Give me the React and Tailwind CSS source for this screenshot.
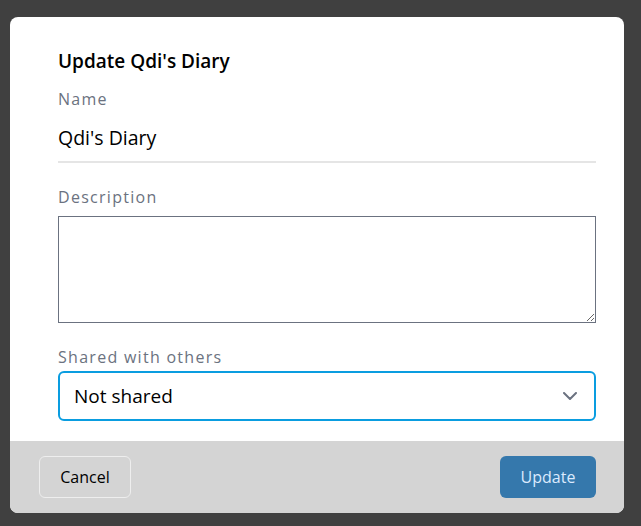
export default function App() {
  return (
    <div className="h-screen bg-[#404040] pl-[10px] pt-[17px]" style={{ fontFamily: '"Open Sans", sans-serif' }}>
      <div className="w-[614px] h-[496px] bg-white rounded-lg overflow-hidden flex flex-col">
        <div className="flex-1 pl-12 pr-7 pt-[32px]">
          <h2 className="text-[19px] font-semibold leading-[24px] text-black">Update Qdi's Diary</h2>
          <label className="block mt-[15px] text-[16px] leading-[22px] tracking-[0.08em] text-[#6b7280]">Name</label>
          <div className="mt-[15px] h-[38px] border-b-2 border-[#e5e5e5] flex items-start">
            <span className="text-[19.5px] leading-[26px] text-black">Qdi's Diary</span>
          </div>
          <label className="block mt-[23px] text-[16px] leading-[22px] tracking-[0.08em] text-[#6b7280]">Description</label>
          <textarea className="block mt-[8px] w-full h-[107px] border border-[#6b7280] outline-none resize-y" />
          <label className="block mt-[23px] text-[16px] leading-[22px] tracking-[0.08em] text-[#6b7280]">Shared with others</label>
          <div className="mt-[3px] h-[50px] border-2 border-[#0a9de0] rounded-md flex items-center justify-between pl-[14px] pr-[17px]">
            <span className="text-[19px] leading-[26px] text-black">Not shared</span>
            <svg width="14" height="8" viewBox="0 0 14 8" fill="none" stroke="#6b7280" strokeWidth="2" strokeLinecap="round" strokeLinejoin="round">
              <path d="M1 1 L7 7 L13 1" />
            </svg>
          </div>
        </div>
        <div className="h-[72px] bg-[#d4d4d4] flex items-center justify-between pl-[29px] pr-[28px]">
          <button className="h-[42px] w-[92px] border border-[#eeeeee] rounded-md text-[16px] text-black">Cancel</button>
          <button className="h-[42px] w-[96px] bg-[#3578ac] rounded-md text-[16px] text-[#dbeafe]">Update</button>
        </div>
      </div>
    </div>
  );
}
